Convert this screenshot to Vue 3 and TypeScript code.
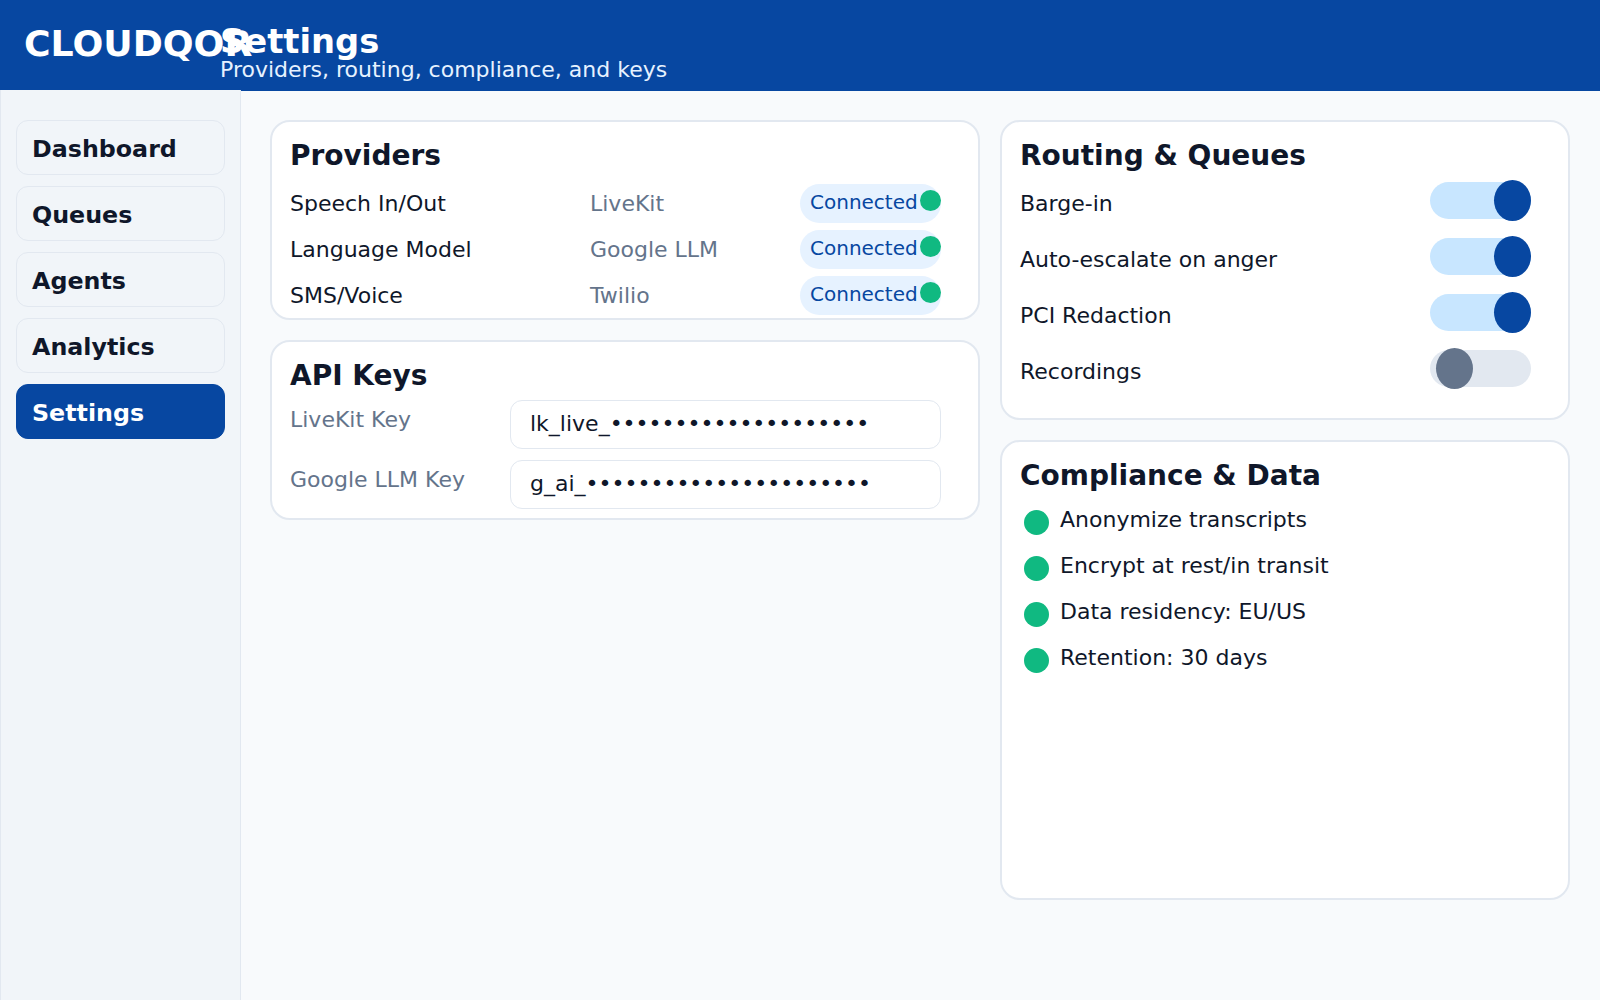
<template>
  <div class="app">
    <header class="topbar">
      <div class="brand">CLOUDQOR</div>
      <div class="title-block">
        <h1>Settings</h1>
        <p>Providers, routing, compliance, and keys</p>
      </div>
    </header>

    <div class="shell">
      <!-- SIDEBAR -->
      <aside class="sidebar">
        <a
          v-for="item in navItems"
          :key="item"
          class="nav-item"
          :class="{ active: item === 'Settings' }"
        >
          {{ item }}
        </a>
      </aside>

      <main class="content">
        <div class="column">
          <section class="card providers">
            <h2>Providers</h2>
            <div v-for="row in providers" :key="row.name" class="provider-row">
              <span>{{ row.name }}</span>
              <span class="muted">{{ row.vendor }}</span>
              <span class="pill">
                <span>Connected</span>
                <i class="pill-dot"></i>
              </span>
            </div>
          </section>

          <section class="card keys">
            <h2>API Keys</h2>
            <div v-for="key in apiKeys" :key="key.label" class="key-row">
              <span class="muted key-label">{{ key.label }}</span>
              <div class="key-input">{{ key.value }}</div>
            </div>
          </section>
        </div>

        <div class="column">
          <section class="card routing">
            <h2>Routing &amp; Queues</h2>
            <div v-for="toggle in toggles" :key="toggle.label" class="toggle-row">
              <span class="toggle-label">{{ toggle.label }}</span>
              <span class="switch" :class="{ on: toggle.on }"><i class="knob"></i></span>
            </div>
          </section>

          <section class="card compliance">
            <h2>Compliance &amp; Data</h2>
            <div v-for="item in compliance" :key="item" class="check-row">
              <i class="check-dot"></i>
              <span>{{ item }}</span>
            </div>
          </section>
        </div>
      </main>
    </div>
  </div>
</template>

<script setup lang="ts">
type Provider = {
  name: string
  vendor: string
}

type ApiKey = {
  label: string
  value: string
}

type Toggle = {
  label: string
  on: boolean
}

const navItems: string[] = ['Dashboard', 'Queues', 'Agents', 'Analytics', 'Settings']

const providers: Provider[] = [
  { name: 'Speech In/Out', vendor: 'LiveKit' },
  { name: 'Language Model', vendor: 'Google LLM' },
  { name: 'SMS/Voice', vendor: 'Twilio' },
]

const apiKeys: ApiKey[] = [
  { label: 'LiveKit Key', value: 'lk_live_' + '•'.repeat(20) },
  { label: 'Google LLM Key', value: 'g_ai_' + '•'.repeat(22) },
]

const toggles: Toggle[] = [
  { label: 'Barge-in', on: true },
  { label: 'Auto-escalate on anger', on: true },
  { label: 'PCI Redaction', on: true },
  { label: 'Recordings', on: false },
]

const compliance: string[] = [
  'Anonymize transcripts',
  'Encrypt at rest/in transit',
  'Data residency: EU/US',
  'Retention: 30 days',
]
</script>

<style>
body {
  background: #f8fafc;
}
</style>

<style scoped>
.app {
  min-height: 1000px;
  display: flex;
  flex-direction: column;
  font-family: "DejaVu Sans", sans-serif;
  font-size: 22px;
  color: #0f172a;
}

.topbar {
  height: 91px;
  margin-bottom: -1px;
  padding: 0 24px;
  display: flex;
  align-items: flex-start;
  background: #0747a1;
  color: #ffffff;
}

.brand {
  width: 196px;
  flex-shrink: 0;
  margin-top: 22px;
  white-space: nowrap;
  font-size: 36.25px;
  font-weight: 700;
}

.title-block {
  margin-top: 27px;
}

.title-block h1 {
  margin: 0;
  font-size: 33.75px;
  line-height: 29px;
  font-weight: 700;
}

.title-block p {
  margin: 0;
  font-size: 22px;
  line-height: 28px;
  color: #e6f2ff;
}

.shell {
  flex: 1;
  display: grid;
  grid-template-columns: 241px 1fr;
}

.sidebar {
  display: flex;
  flex-direction: column;
  gap: 11px;
  padding: 30px 15px;
  background: #f1f5f9;
  border-left: 1px solid #e2e8f0;
  border-right: 1px solid #e2e8f0;
}

.nav-item {
  height: 55px;
  box-sizing: border-box;
  display: flex;
  align-items: center;
  padding: 3px 15px 0;
  border: 1px solid #e2e8f0;
  border-radius: 12px;
  font-size: 23.75px;
  font-weight: 700;
}

.nav-item.active {
  background: #0747a1;
  border-color: #0747a1;
  color: #ffffff;
}

.content {
  display: grid;
  grid-template-columns: 710px 570px;
  gap: 20px;
  align-items: start;
  padding: 30px 30px 0 29px;
}

.column {
  display: flex;
  flex-direction: column;
  gap: 20px;
}

.card {
  box-sizing: border-box;
  padding: 0 18px;
  background: #ffffff;
  border: 2px solid #e2e8f0;
  border-radius: 20px;
}

.card h2 {
  margin: 16px 0 10px;
  line-height: 36px;
  font-size: 28px;
  font-weight: 700;
}

.muted {
  color: #64748b;
}

.providers {
  height: 200px;
}

.provider-row {
  display: grid;
  grid-template-columns: 300px 210px 141px;
  align-items: center;
  height: 39px;
  margin-bottom: 7px;
}

.pill {
  display: flex;
  align-items: flex-start;
  justify-content: space-between;
  height: 39px;
  box-sizing: border-box;
  padding: 3px 0 0 10px;
  border-radius: 999px;
  background: #e6f2ff;
  color: #0747a1;
  font-size: 20px;
  line-height: 30px;
}

.pill-dot {
  width: 21px;
  height: 21px;
  margin-top: 3px;
  border-radius: 50%;
  background: #10b981;
}

.keys {
  height: 180px;
}

.keys h2 {
  margin: 16px 0 6px;
}

.key-row {
  display: grid;
  grid-template-columns: 220px 431px;
  align-items: start;
  margin-bottom: 11px;
}

.key-label {
  padding-top: 4px;
  line-height: 32px;
}

.key-input {
  height: 49px;
  box-sizing: border-box;
  display: flex;
  align-items: center;
  padding: 0 19px 2px;
  border: 1px solid #e2e8f0;
  border-radius: 12px;
  white-space: nowrap;
}

.routing {
  height: 300px;
}

.routing h2 {
  margin-bottom: -2px;
}

.toggle-row {
  display: flex;
  align-items: center;
  justify-content: space-between;
  height: 56px;
  padding-right: 19px;
}

.toggle-label {
  padding-top: 6px;
}

.switch {
  width: 101px;
  height: 37px;
  margin-top: 1px;
  display: flex;
  align-items: center;
  padding-left: 6px;
  box-sizing: border-box;
  border-radius: 999px;
  background: #e2e8f0;
}

.switch.on {
  justify-content: flex-end;
  padding-left: 0;
  background: #c8e6ff;
}

.knob {
  width: 37px;
  height: 41px;
  flex-shrink: 0;
  border-radius: 50%;
  background: #64748b;
}

.switch.on .knob {
  background: #0747a1;
}

.compliance {
  height: 460px;
}

.check-row {
  display: flex;
  align-items: flex-start;
  gap: 11px;
  height: 46px;
  padding-left: 4px;
  line-height: 32px;
}

.check-dot {
  width: 25px;
  height: 25px;
  margin-top: 6px;
  flex-shrink: 0;
  border-radius: 50%;
  background: #10b981;
}
</style>
